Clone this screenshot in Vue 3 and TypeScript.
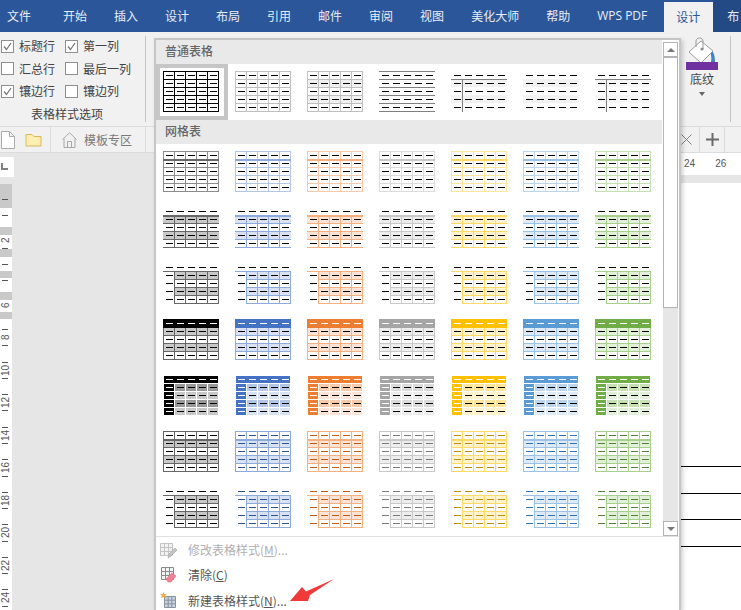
<script setup lang="ts">
type R = { x: number; y: number; w: number; h: number; f: string }

const W = 56
const ACC = ['#000000', '#4472c4', '#ed7d31', '#a5a5a5', '#ffc000', '#5b9bd5', '#70ad47']
const LIGHT = ['#8c8c8c', '#b4c6e7', '#f7caac', '#dbdbdb', '#ffe599', '#bdd6ee', '#c5e0b3']
const MID = ['#666666', '#8eaadb', '#f4b083', '#c9c9c9', '#ffd966', '#9cc2e5', '#a8d08d']
const TINT = ['#c8c8c8', '#d9e2f3', '#fbe4d5', '#ededed', '#fff2cc', '#deeaf6', '#e2efd9']
const DARK5 = ['#999999', '#b4c6e7', '#f7caac', '#dbdbdb', '#ffe599', '#bdd6ee', '#c5e0b3']
const TEXT = ['#000000', '#2f5496', '#c45911', '#7b7b7b', '#bf8f00', '#2e74b5', '#538135']

const hl = (y: number, f: string, x = 0, w = W, h = 1): R => ({ x, y, w, h, f })
const vl = (x: number, f: string, y = 0, h = 41): R => ({ x, y, w: 1, h, f })

function dashes(f: string | ((c: number, r: number) => string)): R[] {
  const out: R[] = []
  for (let r = 0; r < 5; r++)
    for (let c = 0; c < 5; c++) {
      const col = typeof f === 'string' ? f : f(c, r)
      out.push({ x: 3 + 11 * c, y: 4 + 8 * r, w: 7, h: 1, f: col })
    }
  return out
}
function bands(f: string, x = 0, w = W): R[] {
  return [1, 3].map((r) => ({ x, y: 8 * r, w, h: 8, f }))
}
function grid(f: string, yFrom = 0, xFrom = 0): R[] {
  const out: R[] = []
  for (let k = 0; k <= 5; k++) {
    if (8 * k >= yFrom) out.push(hl(8 * k, f, xFrom, W - xFrom))
    if (11 * k >= xFrom) out.push(vl(11 * k, f, yFrom, 41 - yFrom))
  }
  return out
}

function plain(i: number): R[] {
  const black = '#000000'
  const g = '#bfbfbf'
  const l = '#7f7f7f'
  switch (i) {
    case 0:
      return [...grid(black), ...dashes(black)]
    case 1:
      return [...grid(g), ...dashes(black)]
    case 2:
      return [...bands('#f0f0f0'), ...grid(g), ...dashes(black)]
    case 3:
      return [0, 1, 2, 3, 4, 5].map((k) => hl(8 * k, l)).concat(dashes(black))
    case 4:
      return [...bands('#f2f2f2'), hl(8, l), vl(11, l, 8, 33), ...dashes(black)]
    case 5:
      return [...bands('#f2f2f2'), ...dashes(black)]
    default:
      return [...bands('#f7f7f7'), hl(8, l), vl(11, l, 8, 33), ...dashes(black)]
  }
}

function styled(row: number, i: number): R[] {
  const m = MID[i]
  const t = TINT[i]
  switch (row) {
    case 0:
      return [...grid(LIGHT[i]), hl(8, m, 0, W, 2), ...dashes('#000')]
    case 1: {
      const inner: R[] = []
      for (let k = 1; k <= 5; k++) inner.push(hl(8 * k, m))
      for (let k = 1; k <= 4; k++) inner.push(vl(11 * k, m, 8, 33))
      return [...bands(t), ...inner, hl(8, m, 0, W, 2), ...dashes('#000')]
    }
    case 2:
      return [...bands(t, 11, 45), ...grid(m, 8, 11), hl(8, m, 0, 11), ...dashes('#000')]
    case 3:
      return [
        ...bands(t),
        ...grid(m),
        { x: 0, y: 0, w: W, h: 9, f: ACC[i] },
        ...dashes((_c, r) => (r === 0 ? '#ffffff' : '#000000'))
      ]
    case 4: {
      const out: R[] = [{ x: 1, y: 1, w: 54, h: 7, f: ACC[i] }]
      for (let r = 1; r < 5; r++) {
        out.push({ x: 1, y: 1 + 8 * r, w: 10, h: 7, f: ACC[i] })
        for (let c = 1; c < 5; c++)
          out.push({ x: 1 + 11 * c, y: 1 + 8 * r, w: 10, h: 7, f: r % 2 ? DARK5[i] : t })
      }
      return [...out, ...dashes((c, r) => (r === 0 || c === 0 ? '#ffffff' : '#000000'))]
    }
    case 5:
      return [...bands(t), ...grid(m), hl(8, m, 0, W, 2), ...dashes(TEXT[i])]
    default:
      return [...bands(t, 11, 45), ...grid(m, 8, 11), hl(8, m, 0, 11), ...dashes(TEXT[i])]
  }
}

const seven = [0, 1, 2, 3, 4, 5, 6]
const plainThumbs = seven.map(plain)
const gridThumbs = seven.flatMap((row) => seven.map((i) => styled(row, i)))

const tabs = ['开始', '插入', '设计', '布局', '引用', '邮件', '审阅', '视图', '美化大师', '帮助', 'WPS PDF']
const options = [
  { label: '标题行', on: true },
  { label: '第一列', on: true },
  { label: '汇总行', on: false },
  { label: '最后一列', on: false },
  { label: '镶边行', on: true },
  { label: '镶边列', on: false }
]
const hiddenTicks = [2, 6, 7]
const hiddenNums = [0, 4]
const cells = Array.from({ length: 26 }, (_, k) => ({
  tick: !hiddenTicks.includes(k),
  label: k % 2 === 0 && !hiddenNums.includes(k) ? String(k) : ''
}))
</script>

<template>
  <div class="page">
    <header class="tabs">
      <span class="tab first">文件</span>
      <span v-for="t in tabs" :key="t" class="tab" :class="{ latin: t === 'WPS PDF' }">{{ t }}</span>
      <span class="tab active">设计</span>
      <span class="tab rest">布</span>
    </header>

    <section class="ribbon">
      <div class="group">
        <div class="options">
          <label v-for="o in options" :key="o.label" class="opt">
            <span class="box">
              <svg v-if="o.on" width="11" height="11" viewBox="0 0 11 11"><path d="M2 5.500 4.500 8.500 9 2" fill="none" stroke="#777" stroke-width="1.300" /></svg>
            </span>
            {{ o.label }}
          </label>
        </div>
        <div class="group-title">表格样式选项</div>
      </div>
      <div class="rib-sep"></div>
      <div class="rib-spacer"></div>
      <div class="shade">
        <svg width="32" height="32" viewBox="0 0 32 32">
          <path d="M22 10C27 12 29 16 29 24H25C26 20 25 15 23 12z" fill="#3f86c6" />
          <path d="M15 3 27 13 15 25 3 14z" fill="#fff" stroke="#9a9a9a" />
          <path d="M10 9V3C10-1 17-1 17 3V11" fill="none" stroke="#9a9a9a" />
          <circle cx="16" cy="11" r="1.600" fill="#8a8a8a" />
          <rect x="0" y="24" width="32" height="8" fill="#7030a0" />
        </svg>
        <span class="shade-text">底纹</span>
        <span class="caret"></span>
      </div>
      <div class="rib-sep2"></div>
    </section>

    <nav class="toolbar">
      <svg class="doc-ic" width="14" height="18" viewBox="0 0 14 18"><path d="M.5.500h8l5 5v12H.5zM8.500.500v5h5" fill="#fff" stroke="#aaa" /></svg>
      <svg class="folder-ic" width="17" height="14" viewBox="0 0 17 14"><path d="M1 13V1.500h6l2 2h7V13z" fill="#ffefb0" stroke="#d9b65a" stroke-linejoin="round" /></svg>
      <span class="tb-sep"></span>
      <svg class="home-ic" width="15" height="16" viewBox="0 0 15 16"><path d="M.5 7.500 7.500.800l7 6.700M2 6.500v9h11v-9M5.500 15.500v-6h4v6" fill="none" stroke="#a8a8a8" /></svg>
      <span class="tpl">模板专区</span>
      <span class="tb-sep tb-sep2"></span>
      <span class="blue-mark"></span>
      <span class="tb-grow"></span>
      <svg class="close-ic" width="11" height="11" viewBox="0 0 11 11"><path d="M.5.500l10 10M10.500.500l-10 10" stroke="#808080" fill="none" /></svg>
      <span class="plus-box">
        <svg width="13" height="13" viewBox="0 0 13 13"><path d="M6.500 0v13M0 6.500h13" stroke="#6a6a6a" stroke-width="2" fill="none" /></svg>
      </span>
    </nav>

    <main class="body">
      <aside class="left">
        <div class="corner"><span class="corner-box"><i class="l-mark"></i></span></div>
        <div class="vruler">
          <div v-for="(c, k) in cells" :key="k" class="vcell">
            <i class="tick" :class="{ off: !c.tick }"></i>
            <span class="vnum">{{ c.label }}</span>
          </div>
        </div>
      </aside>
      <div class="workspace"></div>
      <div class="doc">
        <div class="hruler"><span>24</span><span>26</span></div>
        <div class="hstrip"></div>
        <div class="sheet">
          <i class="rule"></i><i class="rule"></i><i class="rule"></i><i class="rule"></i>
        </div>
      </div>
    </main>

    <div class="popup">
      <div class="gallery-wrap">
        <div class="gallery">
          <div class="sec-title">普通表格</div>
          <div class="thumbs">
            <div v-for="(t, i) in plainThumbs" :key="i" class="cell" :class="{ selected: i === 0 }">
              <svg width="56" height="41" viewBox="0 0 56 41" shape-rendering="crispEdges">
                <rect v-for="(r, j) in t" :key="j" :x="r.x" :y="r.y" :width="r.w" :height="r.h" :fill="r.f" />
              </svg>
            </div>
          </div>
          <div class="sec-title">网格表</div>
          <div class="thumbs">
            <div v-for="(t, i) in gridThumbs" :key="i" class="cell">
              <svg width="56" height="41" viewBox="0 0 56 41" shape-rendering="crispEdges">
                <rect v-for="(r, j) in t" :key="j" :x="r.x" :y="r.y" :width="r.w" :height="r.h" :fill="r.f" />
              </svg>
            </div>
          </div>
        </div>
        <div class="scroll">
          <div class="sb-btn"><i class="up"></i></div>
          <div class="sb-thumb"></div>
          <div class="sb-track"></div>
          <div class="sb-btn"><i class="down"></i></div>
        </div>
      </div>
      <div class="menu">
        <div class="item disabled">
          <svg width="18" height="18" viewBox="0 0 18 18">
            <path d="M.5 2.500h12v12H.5zM.5 6.500h12M.5 10.500h12M4.500 2.500v12M8.500 2.500v12" fill="#f2f2f2" stroke="#c4c4c4" />
            <path d="M8 17l1-4 6-6 2 2-6 6z" fill="#c4c4c4" stroke="#a8a8a8" stroke-width=".7" />
          </svg>
          <span>修改表格样式(<u>M</u>)...</span>
        </div>
        <div class="item">
          <svg width="18" height="18" viewBox="0 0 18 18">
            <path d="M1.500 1.500h12v12h-12zM1.500 5.500h12M1.500 9.500h12M5.500 1.500v12M9.500 1.500v12" fill="#f4f4f4" stroke="#8a8a8a" />
            <path d="M6 13l6-6 4 3-5 6H8z" fill="#ef8096" stroke="#e26a82" stroke-width=".6" />
          </svg>
          <span>清除(<u>C</u>)</span>
        </div>
        <div class="item">
          <svg width="18" height="18" viewBox="0 0 18 18">
            <path d="M4.500 4.500h11v11h-11zM4.500 8.200h11M4.500 11.800h11M8.200 4.500v11M11.800 4.500v11" fill="#c7d3e2" stroke="#8a929c" />
            <path d="M3.500 0l.9 2.200 2.600-.4-1.900 1.900 1 2.500-2.600-1.100L.9 6.200l1-2.500L0 1.800l2.600.4z" fill="#f0a93c" />
          </svg>
          <span>新建表格样式(<u>N</u>)...</span>
        </div>
      </div>
    </div>

    <svg class="arrow" width="46" height="24" viewBox="0 0 46 24">
      <path d="M1 22 13 8 17 12.500 45 0 21 16 19 22z" fill="#f03a3a" />
    </svg>
  </div>
</template>

<style scoped>
.page {
  position: relative;
  width: 741px;
  height: 610px;
  overflow: hidden;
  display: flex;
  flex-direction: column;
  background: #e6e6e6;
  font-family: "Noto Sans CJK SC", "Liberation Sans", sans-serif;
  font-size: 12px;
  line-height: 16px;
  color: #444;
}
.tabs {
  height: 32px;
  flex: none;
  display: flex;
  align-items: flex-end;
  background: #2b579a;
  color: #e8edf5;
  white-space: nowrap;
  overflow: hidden;
}
.tab {
  flex: none;
  height: 32px;
  line-height: 31px;
  padding: 0 13.5px;
}
.first {
  width: 49.5px;
  padding: 0 0 0 7px;
  box-sizing: border-box;
}
.latin {
  width: 52px;
  padding: 0 15px 0 13.5px;
  font-family: "Open Sans", "Liberation Sans", sans-serif;
}
.active {
  width: 25px;
  height: 30px;
  line-height: 29px;
  padding: 0 12px;
  background: #f1f1f1;
  color: #2b579a;
}
.rest {
  flex: 1 0 auto;
  padding: 0 0 0 14px;
  background: #234a84;
}
.ribbon {
  height: 94px;
  flex: none;
  display: flex;
  background: #f1f1f1;
}
.group {
  width: 134px;
  display: flex;
  flex-direction: column;
}
.options {
  margin-top: 3px;
  padding-left: 1px;
  display: grid;
  grid-template-columns: 64px 1fr;
  grid-auto-rows: 22.5px;
}
.opt {
  display: flex;
  align-items: center;
  gap: 5px;
  white-space: nowrap;
}
.box {
  width: 11px;
  height: 11px;
  flex: none;
  display: block;
  border: 1px solid #8f8f8f;
  background: #fff;
}
.box svg { display: block; }
.group-title {
  margin-top: 3px;
  text-align: center;
}
.rib-sep {
  width: 1px;
  margin: 4px 0 4px 11px;
  background: #c4c4c4;
}
.rib-spacer { flex: 1; }
.shade {
  width: 32px;
  margin-top: 6px;
  display: flex;
  flex-direction: column;
  align-items: center;
}
.shade svg { display: block; overflow: visible; }
.shade-text {
  margin-top: 1px;
  line-height: 16px;
}
.caret {
  margin-top: 5px;
  border: 3.5px solid transparent;
  border-top: 4px solid #666;
}
.rib-sep2 {
  width: 1px;
  margin: 4px 10px 4px 12px;
  background: #c4c4c4;
}
.toolbar {
  height: 25px;
  flex: none;
  display: flex;
  align-items: center;
  background: #f1f1f1;
  border-top: 1px solid #dcdcdc;
  border-bottom: 1px solid #dcdcdc;
}
.doc-ic { margin-left: 1px; }
.folder-ic { margin-left: 10px; }
.tb-sep {
  width: 1px;
  align-self: stretch;
  margin-left: 8px;
  background: #dcdcdc;
}
.home-ic { margin-left: 11px; }
.tpl {
  margin-left: 7px;
  color: #7a7a7a;
}
.tb-sep2 { margin-left: 13px; }
.blue-mark {
  width: 2px;
  height: 13px;
  margin-left: 8px;
  background: #2b579a;
}
.tb-grow { flex: 1; }
.close-ic { margin-right: 7px; }
.plus-box {
  width: 26px;
  align-self: stretch;
  margin-right: 16px;
  display: flex;
  align-items: center;
  justify-content: center;
  border-left: 1px solid #dcdcdc;
  border-right: 1px solid #dcdcdc;
  box-sizing: border-box;
}
.body {
  flex: 1;
  min-height: 0;
  display: flex;
}
.left {
  width: 18px;
  flex: none;
  display: flex;
  flex-direction: column;
}
.corner {
  height: 31px;
  flex: none;
}
.corner-box {
  display: block;
  width: 14px;
  height: 20px;
  margin-top: 4px;
  background: #fff;
  position: relative;
}
.l-mark {
  display: block;
  position: absolute;
  left: 1px;
  top: 6px;
  width: 5px;
  height: 5px;
  border-left: 2px solid #808080;
  border-bottom: 2px solid #808080;
}
.vruler {
  width: 12px;
  flex: 1;
  padding-top: 15px;
  background: linear-gradient(#c9c9c9 0 24px, #fff 24px 43px, #c9c9c9 43px 51px, #fff 51px 65px, #c9c9c9 65px 73px, #fff 73px 87px, #c9c9c9 87px 94px, #fff 94px 108px, #c9c9c9 108px 116px, #fff 116px 128px, #c9c9c9 128px 135px, #fff 135px);
  overflow: hidden;
}
.vcell {
  height: 16.27px;
  position: relative;
}
.tick {
  display: block;
  width: 6px;
  height: 1px;
  margin-left: 2px;
  background: #555;
}
.off { background: transparent; }
.vnum {
  position: absolute;
  left: 0;
  width: 12px;
  top: 1px;
  height: 15px;
  display: flex;
  align-items: center;
  justify-content: center;
  writing-mode: vertical-rl;
  transform: rotate(180deg);
  font: 10px/12px "Liberation Sans", sans-serif;
  color: #555;
}
.workspace {
  flex: 1;
  background: #e6e6e6;
}
.doc {
  width: 60px;
  flex: none;
  display: flex;
  flex-direction: column;
  background: #fff;
}
.hruler {
  height: 22px;
  flex: none;
  padding-left: 3px;
  display: flex;
  gap: 20px;
  align-items: center;
  font: 10px/12px "Liberation Sans", sans-serif;
  color: #555;
}
.hstrip {
  height: 8px;
  flex: none;
  background: #e6e6e6;
}
.sheet {
  flex: 1;
  padding-top: 283px;
}
.rule {
  display: block;
  height: 1px;
  margin-bottom: 25.5px;
  background: #000;
}
.popup {
  position: absolute;
  left: 154px;
  top: 38px;
  bottom: 0;
  width: 527px;
  box-sizing: border-box;
  display: flex;
  flex-direction: column;
  background: #fff;
  border: 2px solid #c6c6c6;
  border-bottom: none;
  box-shadow: 2px 2px 4px rgba(0, 0, 0, .18);
  overflow: hidden;
}
.gallery-wrap {
  height: 496px;
  flex: none;
  display: flex;
}
.gallery {
  width: 506px;
  flex: none;
  overflow: hidden;
}
.sec-title {
  height: 24px;
  padding-left: 9px;
  line-height: 22px;
  font-weight: 500;
  color: #666;
  background: #e9e9e9;
}
.thumbs {
  display: grid;
  grid-template-columns: repeat(7, 72px);
  grid-auto-rows: 56px;
}
.cell {
  padding: 7px 0 0 7px;
  box-sizing: border-box;
}
.cell svg { display: block; }
.selected {
  padding: 3px 0 0 3px;
  border: 4px solid #c6c6c6;
}
.scroll {
  width: 15px;
  margin-left: 1px;
  padding-top: 2px;
  display: flex;
  flex-direction: column;
}
.sb-btn {
  height: 15px;
  flex: none;
  box-sizing: border-box;
  border: 1px solid #b4b4b4;
  display: flex;
  align-items: center;
  justify-content: center;
  background: #fff;
}
.up, .down {
  display: block;
  border: 4px solid transparent;
}
.up {
  border-bottom: 4px solid #777;
  margin-top: -4px;
}
.down {
  border-top: 4px solid #777;
  margin-top: 4px;
}
.sb-thumb {
  height: 251px;
  flex: none;
  box-sizing: border-box;
  border: 1px solid #b4b4b4;
  background: #fff;
}
.sb-track {
  flex: 1;
  background: #e6e6e6;
}
.menu {
  flex: 1;
  border-top: 1px solid #e0e0e0;
}
.item {
  height: 25.5px;
  padding-left: 4px;
  display: flex;
  align-items: center;
  gap: 10px;
  color: #555;
}
.item svg { flex: none; }
.disabled { color: #b0b0b0; }
.arrow {
  position: absolute;
  left: 289px;
  top: 579px;
}
</style>
